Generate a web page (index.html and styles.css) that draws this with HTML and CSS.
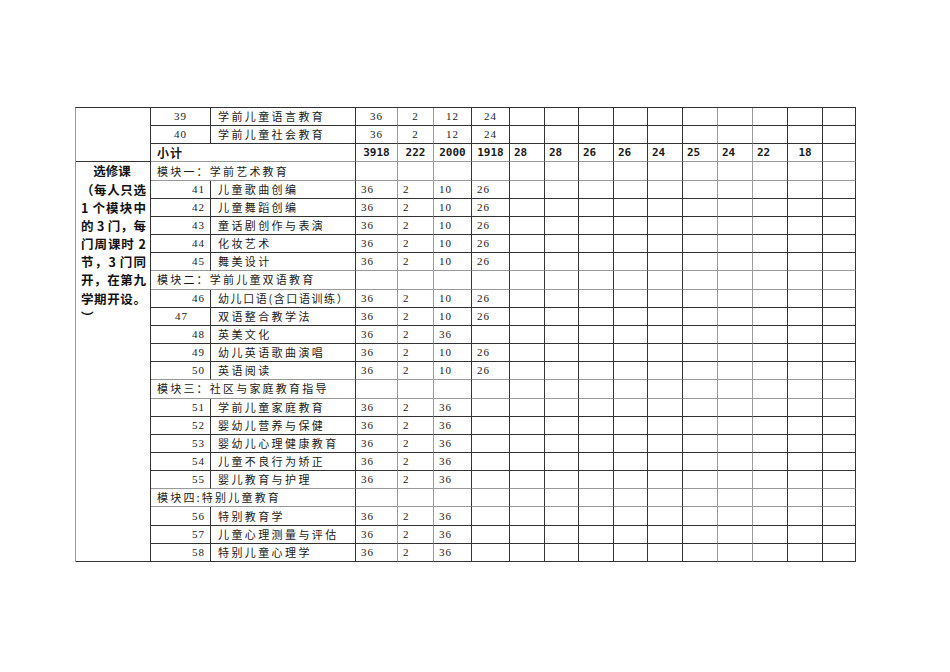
FILE: index.html
```html
<!DOCTYPE html>
<html lang="zh-CN">
<head>
<meta charset="utf-8">
<title>课程表</title>
<link rel="stylesheet" href="styles.css">
</head>
<body>
<table class="grid">
<colgroup>
<col class="w75"><col class="w60"><col class="w145"><col class="w42"><col class="w36"><col class="w38"><col class="w38">
<col class="w35"><col class="w34"><col class="w35"><col class="w34"><col class="w35"><col class="w35"><col class="w35"><col class="w35"><col class="w35"><col class="w33">
</colgroup>
<tbody>
<tr>
<td class="cat" rowspan="3"></td>
<td class="no c">39</td><td class="nm">学前儿童语言教育</td>
<td class="v c gr">36</td><td class="v c gr">2</td><td class="v c">12</td><td class="v c">24</td>
<td></td><td></td><td></td><td></td><td></td><td class="gr"></td><td class="gr"></td><td></td><td></td><td></td>
</tr>
<tr>
<td class="no c">40</td><td class="nm">学前儿童社会教育</td>
<td class="v c gr">36</td><td class="v c gr">2</td><td class="v c">12</td><td class="v c">24</td>
<td></td><td></td><td></td><td></td><td></td><td class="gr"></td><td class="gr"></td><td></td><td></td><td></td>
</tr>
<tr class="sum">
<td class="mod b" colspan="2">小计</td>
<td class="t c gr">3918</td><td class="t c gr">222</td><td class="t c">2000</td><td class="t c">1918</td>
<td class="t">28</td><td class="t">28</td><td class="t">26</td><td class="t">26</td><td class="t">24</td><td class="t gr">25</td><td class="t gr">24</td><td class="t">22</td><td class="t c">18</td><td></td>
</tr>
<tr class="mrow">
<td class="cat" rowspan="22">
<div class="title">选修课</div>
<div class="j">（每人只选</div>
<div class="j">1 个模块中</div>
<div class="j">的 3 门，每</div>
<div class="j">门周课时 2</div>
<div class="j">节，3 门同</div>
<div class="j">开，在第九</div>
<div class="j">学期开设。</div>
<div>︶</div>
</td>
<td class="mod" colspan="2">模块一：学前艺术教育</td>
<td class="gr"></td><td class="gr"></td><td></td><td></td><td></td><td></td><td></td><td></td><td></td><td class="gr"></td><td class="gr"></td><td></td><td></td><td></td>
</tr>
<tr><td class="no">41</td><td class="nm">儿童歌曲创编</td><td class="v gr">36</td><td class="v gr">2</td><td class="v">10</td><td class="v">26</td><td></td><td></td><td></td><td></td><td></td><td class="gr"></td><td class="gr"></td><td></td><td></td><td></td></tr>
<tr><td class="no">42</td><td class="nm">儿童舞蹈创编</td><td class="v gr">36</td><td class="v gr">2</td><td class="v">10</td><td class="v">26</td><td></td><td></td><td></td><td></td><td></td><td class="gr"></td><td class="gr"></td><td></td><td></td><td></td></tr>
<tr><td class="no">43</td><td class="nm">童话剧创作与表演</td><td class="v gr">36</td><td class="v gr">2</td><td class="v">10</td><td class="v">26</td><td></td><td></td><td></td><td></td><td></td><td class="gr"></td><td class="gr"></td><td></td><td></td><td></td></tr>
<tr><td class="no">44</td><td class="nm">化妆艺术</td><td class="v gr">36</td><td class="v gr">2</td><td class="v">10</td><td class="v">26</td><td></td><td></td><td></td><td></td><td></td><td class="gr"></td><td class="gr"></td><td></td><td></td><td></td></tr>
<tr class="pre"><td class="no">45</td><td class="nm">舞美设计</td><td class="v gr">36</td><td class="v gr">2</td><td class="v">10</td><td class="v">26</td><td></td><td></td><td></td><td></td><td></td><td class="gr"></td><td class="gr"></td><td></td><td></td><td></td></tr>
<tr class="mrow">
<td class="mod" colspan="2">模块二：学前儿童双语教育</td>
<td class="gr"></td><td class="gr"></td><td></td><td></td><td></td><td></td><td></td><td></td><td></td><td class="gr"></td><td class="gr"></td><td></td><td></td><td></td>
</tr>
<tr><td class="no">46</td><td class="nm tight">幼儿口语(含口语训练）</td><td class="v gr">36</td><td class="v gr">2</td><td class="v">10</td><td class="v">26</td><td></td><td></td><td></td><td></td><td></td><td class="gr"></td><td class="gr"></td><td></td><td></td><td></td></tr>
<tr><td class="no mid">47</td><td class="nm">双语整合教学法</td><td class="v gr">36</td><td class="v gr">2</td><td class="v">10</td><td class="v">26</td><td></td><td></td><td></td><td></td><td></td><td class="gr"></td><td class="gr"></td><td></td><td></td><td></td></tr>
<tr><td class="no">48</td><td class="nm">英美文化</td><td class="v gr">36</td><td class="v gr">2</td><td class="v">36</td><td class="v"></td><td></td><td></td><td></td><td></td><td></td><td class="gr"></td><td class="gr"></td><td></td><td></td><td></td></tr>
<tr><td class="no">49</td><td class="nm">幼儿英语歌曲演唱</td><td class="v gr">36</td><td class="v gr">2</td><td class="v">10</td><td class="v">26</td><td></td><td></td><td></td><td></td><td></td><td class="gr"></td><td class="gr"></td><td></td><td></td><td></td></tr>
<tr class="pre"><td class="no">50</td><td class="nm">英语阅读</td><td class="v gr">36</td><td class="v gr">2</td><td class="v">10</td><td class="v">26</td><td></td><td></td><td></td><td></td><td></td><td class="gr"></td><td class="gr"></td><td></td><td></td><td></td></tr>
<tr class="mrow">
<td class="mod" colspan="2">模块三：社区与家庭教育指导</td>
<td class="gr"></td><td class="gr"></td><td></td><td></td><td></td><td></td><td></td><td></td><td></td><td class="gr"></td><td class="gr"></td><td></td><td></td><td></td>
</tr>
<tr><td class="no">51</td><td class="nm">学前儿童家庭教育</td><td class="v gr">36</td><td class="v gr">2</td><td class="v">36</td><td class="v"></td><td></td><td></td><td></td><td></td><td></td><td class="gr"></td><td class="gr"></td><td></td><td></td><td></td></tr>
<tr><td class="no">52</td><td class="nm">婴幼儿营养与保健</td><td class="v gr">36</td><td class="v gr">2</td><td class="v">36</td><td class="v"></td><td></td><td></td><td></td><td></td><td></td><td class="gr"></td><td class="gr"></td><td></td><td></td><td></td></tr>
<tr><td class="no">53</td><td class="nm">婴幼儿心理健康教育</td><td class="v gr">36</td><td class="v gr">2</td><td class="v">36</td><td class="v"></td><td></td><td></td><td></td><td></td><td></td><td class="gr"></td><td class="gr"></td><td></td><td></td><td></td></tr>
<tr><td class="no">54</td><td class="nm">儿童不良行为矫正</td><td class="v gr">36</td><td class="v gr">2</td><td class="v">36</td><td class="v"></td><td></td><td></td><td></td><td></td><td></td><td class="gr"></td><td class="gr"></td><td></td><td></td><td></td></tr>
<tr class="pre"><td class="no">55</td><td class="nm">婴儿教育与护理</td><td class="v gr">36</td><td class="v gr">2</td><td class="v">36</td><td class="v"></td><td></td><td></td><td></td><td></td><td></td><td class="gr"></td><td class="gr"></td><td></td><td></td><td></td></tr>
<tr class="mrow">
<td class="mod" colspan="2">模块四:特别儿童教育</td>
<td class="gr"></td><td class="gr"></td><td></td><td></td><td></td><td></td><td></td><td></td><td></td><td class="gr"></td><td class="gr"></td><td></td><td></td><td></td>
</tr>
<tr><td class="no">56</td><td class="nm">特别教育学</td><td class="v gr">36</td><td class="v gr">2</td><td class="v">36</td><td class="v"></td><td></td><td></td><td></td><td></td><td></td><td class="gr"></td><td class="gr"></td><td></td><td></td><td></td></tr>
<tr><td class="no">57</td><td class="nm">儿童心理测量与评估</td><td class="v gr">36</td><td class="v gr">2</td><td class="v">36</td><td class="v"></td><td></td><td></td><td></td><td></td><td></td><td class="gr"></td><td class="gr"></td><td></td><td></td><td></td></tr>
<tr><td class="no">58</td><td class="nm">特别儿童心理学</td><td class="v gr">36</td><td class="v gr">2</td><td class="v">36</td><td class="v"></td><td></td><td></td><td></td><td></td><td></td><td class="gr"></td><td class="gr"></td><td></td><td></td><td></td></tr>
</tbody>
</table>
</body>
</html>
```

FILE: styles.css
```css
html, body {
  margin: 0;
  padding: 0;
  background: #ffffff;
}

body {
  width: 950px;
  height: 672px;
  overflow: hidden;
  font-family: "Noto Sans CJK SC", sans-serif;
  color: #1a1a1a;
}

.grid {
  margin: 107px 0 0 75px;
  width: 780px;
  table-layout: fixed;
  border-collapse: separate;
  border-spacing: 0;
  border-top: 1px solid #333;
  border-left: 1px solid #9a9a9a;
}

.w75 { width: 75px; }
.w60 { width: 60px; }
.w145 { width: 145px; }
.w42 { width: 42px; }
.w36 { width: 36px; }
.w38 { width: 38px; }
.w35 { width: 35px; }
.w34 { width: 34px; }
.w33 { width: 33px; }

.grid tr {
  height: 18.16px;
}

.grid td {
  padding: 0;
  border-right: 1px solid #333;
  border-bottom: 1px solid #333;
  vertical-align: middle;
  white-space: nowrap;
  overflow: hidden;
  font-size: 11px;
  line-height: 17px;
}

.grid td.gr {
  border-right-color: #9a9a9a;
}

.grid tr.sum td,
.grid tr.mrow td,
.grid tr.pre td {
  border-bottom-color: #9a9a9a;
}

.grid tr.mrow td.cat {
  border-bottom-color: #333;
}

.grid td.cat {
  vertical-align: top;
  padding: 0 4px 0 5px;
  font-weight: bold;
  font-size: 12.5px;
  line-height: 18.16px;
  white-space: normal;
  color: #111;
}

.cat .title {
  text-align: center;
  padding-right: 3px;
}

.cat .j {
  text-align: justify;
  text-align-last: justify;
}

.no {
  font-family: "Liberation Serif", serif;
  font-size: 13px;
  letter-spacing: 1px;
  text-align: right;
  padding-right: 5px !important;
}

.no.c {
  text-align: center;
  padding-right: 0 !important;
}

.no.mid {
  text-align: center;
  padding-right: 0 !important;
  padding-left: 2px !important;
}

.nm {
  padding-left: 7px !important;
  letter-spacing: 2.4px;
}

.nm.tight {
  letter-spacing: 1.6px;
}

.mod {
  padding-left: 6px !important;
  letter-spacing: 2.2px;
}

.mod.b {
  font-weight: bold;
  font-size: 12px;
  letter-spacing: 1px;
}

.v {
  font-family: "Liberation Serif", serif;
  font-size: 12px;
  letter-spacing: 1px;
  padding-left: 5px !important;
}

.v.c {
  text-align: center;
  padding-left: 0 !important;
}

.t {
  font-family: "DejaVu Sans Mono", monospace;
  font-weight: bold;
  font-size: 11px;
  padding-left: 4px !important;
}

.t.c {
  text-align: center;
  padding-left: 0 !important;
}
```
